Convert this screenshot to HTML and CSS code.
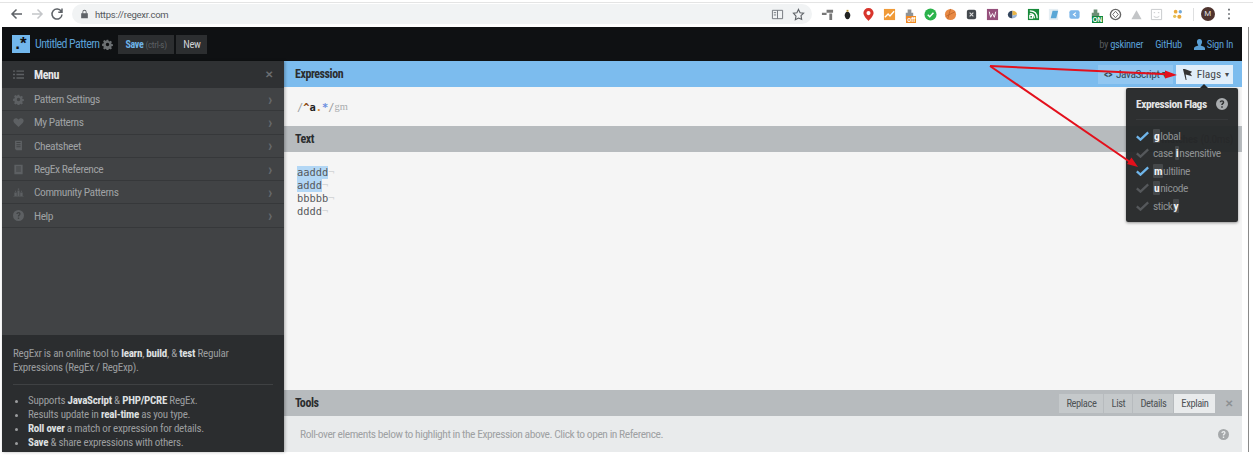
FILE: index.html
```html
<!DOCTYPE html>
<html lang="en">
<head>
<meta charset="utf-8">
<title>RegExr</title>
<link rel="stylesheet" href="styles.css">
</head>
<body>
<svg class="defs" width="0" height="0" aria-hidden="true">
  <symbol id="gear" viewBox="0 0 16 16"><path fill-rule="evenodd" d="M6.800 1h2.400l.4 2 1.300.6 1.800-1.100 1.700 1.700-1.100 1.800.6 1.300 2 .4v2.400l-2 .4-.6 1.300 1.100 1.800-1.700 1.700-1.800-1.100-1.300.6-.4 2H6.800l-.4-2-1.300-.6-1.800 1.100-1.700-1.700 1.100-1.800-.6-1.300-2-.4V6.800l2-.4.6-1.300-1.100-1.800 1.700-1.700 1.800 1.100 1.300-.6zM8 5.500a2.500 2.500 0 1 0 0 5 2.500 2.500 0 0 0 0-5z"/></symbol>
  <symbol id="heart" viewBox="0 0 16 16"><path d="M8 14.500 1.900 8.600C-.9 5.700 1 1.800 4.300 1.800c1.600 0 2.800.8 3.700 2.100.9-1.300 2.100-2.100 3.700-2.100 3.300 0 5.200 3.900 2.400 6.800z"/></symbol>
  <symbol id="sheet" viewBox="0 0 16 16"><path fill-rule="evenodd" d="M3 1h10v14H5l-2-2zM5 3v1.500h6V3zm0 3v1.500h6V6zm0 3v1.500h6V9z"/></symbol>
  <symbol id="book" viewBox="0 0 16 16"><path fill-rule="evenodd" d="M2 1h12v14H2zM4.500 3.500V5h7V3.500zm0 3V8h7V6.500zm0 3V11h7V9.500z"/></symbol>
  <symbol id="people" viewBox="0 0 16 16"><path d="M6.500 5h3v8h-3zM2 8h3.500v5H2zm8.500 0H14v5h-3.500zM7 2h2v2H7zM3 5.500h1.500V7H3zm8.500 0H13V7h-1.500zM.5 13.500h15V14H.5z"/></symbol>
  <symbol id="help" viewBox="0 0 16 16"><path fill-rule="evenodd" d="M8 0a8 8 0 1 1 0 16A8 8 0 0 1 8 0zM7 11v2h2v-2zM8 3C6.200 3 5 4.100 4.900 5.800h2c.1-.7.500-1 1.100-1 .6 0 1 .4 1 .9 0 .5-.3.800-.9 1.200-.8.600-1.100 1.100-1.100 2.100v.4h2v-.3c0-.5.200-.8.800-1.200C10.600 7.300 11 6.600 11 5.600 11 4 9.800 3 8 3z"/></symbol>
  <symbol id="check" viewBox="0 0 16 12"><path fill="none" stroke="currentColor" stroke-width="2.800" d="M1 6.500 5.500 10.500 15 1.500"/></symbol>
</svg>

<div class="browser">
  <div class="nav">
    <svg class="nav-ico" viewBox="0 0 14 14"><path d="M12 7H2M6.500 2.500 2 7l4.500 4.500" fill="none" stroke="#5f6368" stroke-width="1.500"/></svg>
    <svg class="nav-ico" viewBox="0 0 14 14"><path d="M2 7h10M7.500 2.500 12 7l-4.500 4.500" fill="none" stroke="#c4c6c9" stroke-width="1.500"/></svg>
    <svg class="nav-ico" viewBox="0 0 14 14"><path d="M11.300 4.500A5 5 0 1 0 12 7.500M12 1.500v3.700H8.300" fill="none" stroke="#5f6368" stroke-width="1.500"/></svg>
  </div>
  <div class="omnibox">
    <svg class="lock" viewBox="0 0 10 12"><path fill="#5f6368" d="M1 5h8v6H1zM2.500 5V3.500a2.500 2.500 0 0 1 5 0V5h-1V3.500a1.500 1.500 0 0 0-3 0V5z"/></svg>
    <span class="url">https://regexr.com</span>
    <span class="omni-end">
      <svg class="ext-14" viewBox="0 0 14 14"><path d="M1.500 2.500h11v9h-11zM7 2.500v9M3 5h2.500M3 7.500h2.500" fill="none" stroke="#70757a"/></svg>
      <svg class="ext-14" viewBox="0 0 14 14"><path d="m7 1.500 1.700 3.600 3.800.5-2.800 2.700.7 3.900L7 10.800l-3.400 1.900.7-3.900L1.500 5.600l3.800-.5z" fill="none" stroke="#5f6368" stroke-width="1.200"/></svg>
    </span>
  </div>
  <div class="exts">
    <svg class="ext" viewBox="0 0 14 14"><path fill="#777" d="M1 5h5v2.500H1zm5-3h7v3H6zm3 4h3v7H9z"/></svg>
    <svg class="ext" viewBox="0 0 14 14"><path fill="#222" d="M7 4c2 0 3 2 3 4s-1.300 4-3 4-3-2-3-4 1-4 3-4z"/><path fill="#b9942f" d="M6 2h2v2H6z"/></svg>
    <svg class="ext" viewBox="0 0 14 14"><path fill="#d8352c" d="M7 0a5.500 5.500 0 0 1 5.500 5.500C12.500 9 7 14 7 14S1.500 9 1.500 5.500A5.500 5.500 0 0 1 7 0z"/><circle cx="7" cy="5.500" r="2.200" fill="#fff"/></svg>
    <svg class="ext" viewBox="0 0 14 14"><path fill="#f09a37" d="M1 1h12v12H1z"/><path d="m2 10 3.500-3.500 2 2L12 3.500" fill="none" stroke="#fff" stroke-width="1.500"/></svg>
    <span class="ext ext-badged">
      <svg class="ext" viewBox="0 0 14 14"><path fill="#8d9296" d="M3 5h8v7H3zM5 1.500h4V5H5z"/></svg>
      <span class="badge badge-off">off</span>
    </span>
    <svg class="ext" viewBox="0 0 14 14"><circle cx="7" cy="7" r="6.500" fill="#2bb34b"/><path d="m4 7.200 2.200 2.200L10.200 5" fill="none" stroke="#fff" stroke-width="1.600"/></svg>
    <svg class="ext" viewBox="0 0 14 14"><circle cx="7" cy="7" r="6" fill="#e88a45"/><path d="M2 9 12 4M4 12 7 1" fill="none" stroke="#b9622a" stroke-width=".8"/></svg>
    <svg class="ext" viewBox="0 0 14 14"><rect x="2" y="2" width="10" height="10" rx="2" fill="#454a4f"/><path d="m5 5 4 4m0-4-4 4" stroke="#ddd" stroke-width="1.200"/></svg>
    <svg class="ext" viewBox="0 0 14 14"><path fill="#96507c" d="M1 1h12v12H1z"/><path d="m3.500 4 1.500 6 2-4 2 4 1.500-6" fill="none" stroke="#fff"/></svg>
    <svg class="ext" viewBox="0 0 14 14"><path fill="#33465e" d="M2 7a5 5 0 0 1 5-4v8a4 4 0 0 1-5-4z"/><path fill="#e9b547" d="M7 3a5 5 0 0 1 5 4l-5 1z"/><path fill="#9ab5d6" d="M7 8l5-1a5 5 0 0 1-5 4z"/></svg>
    <svg class="ext" viewBox="0 0 14 14"><path fill="#178a3a" d="M1 1h12v12H1z"/><path d="M3 11V8h3v3zM3 6c3 0 5 2 5 5M3 3c5 0 8 3 8 8" fill="none" stroke="#fff" stroke-width="1.300"/></svg>
    <svg class="ext" viewBox="0 0 14 14"><path fill="#e5eef3" d="M2 1h10v12H2z"/><path fill="#5aa7d6" d="M6 3h6l-2 8H4z"/></svg>
    <svg class="ext" viewBox="0 0 14 14"><rect x="1.500" y="2.500" width="11" height="9" rx="2" fill="#7db7ea"/><path d="M8.500 5 6 7l2.500 2" fill="none" stroke="#fff" stroke-width="1.300"/></svg>
    <span class="ext ext-badged">
      <svg class="ext" viewBox="0 0 14 14"><path fill="#6d8f76" d="M3 5h8v7H3zM5 1.500h4V5H5z"/></svg>
      <span class="badge badge-on">ON</span>
    </span>
    <svg class="ext" viewBox="0 0 14 14"><circle cx="7" cy="7" r="5.500" fill="none" stroke="#666" stroke-width="1.500"/><path d="M7 3.500 10 7 7 10.500 4 7z" fill="none" stroke="#666"/></svg>
    <svg class="ext" viewBox="0 0 14 14"><path fill="#c3c5c7" d="m7 2.500 5.500 9.500h-11z"/></svg>
    <svg class="ext" viewBox="0 0 14 14"><path fill="none" stroke="#c6c8ca" d="M1.500 1.500h11v11h-11zM4 5h1.500M8.500 5H10M4 9c2 1.500 4 1.500 6 0"/></svg>
    <svg class="ext" viewBox="0 0 14 14"><circle cx="5" cy="4" r="2" fill="#e9a93b"/><circle cx="10" cy="4" r="1.800" fill="#72a9d9"/><circle cx="4" cy="9" r="1.800" fill="#e5c15a"/><circle cx="9" cy="9.500" r="2.200" fill="#e9a93b"/></svg>
    <span class="sep"></span>
    <span class="avatar">M</span>
    <svg class="kebab" viewBox="0 0 4 14"><path fill="#5f6368" d="M1 1h2v2H1zm0 5h2v2H1zm0 5h2v2H1z"/></svg>
  </div>
</div>

<div class="stage">
  <div class="app">
    <header class="topbar">
      <span class="logo">.*</span>
      <span class="title">Untitled Pattern</span>
      <svg class="gear-top"><use href="#gear"/></svg>
      <span class="btn btn-save"><b>Save</b> <span class="dim">(ctrl-s)</span></span>
      <span class="btn btn-new">New</span>
      <span class="top-right">
        <span class="by">by <span class="link">gskinner</span></span>
        <span class="link">GitHub</span>
        <span class="signin">
          <svg class="user" viewBox="0 0 12 12"><path fill="#5a9fd4" d="M6 0c1.800 0 2.800 1.300 2.800 3S7.700 6.500 7.300 7c1.800.5 4.700 1.300 4.700 3.200V12H0v-1.800C0 8.300 2.900 7.500 4.700 7 4.300 6.500 3.200 4.700 3.200 3S4.200 0 6 0z"/></svg>
          <span class="link">Sign In</span>
        </span>
      </span>
    </header>
    <div class="body">
      <aside class="side">
        <div class="menu-head">
          <svg class="ico ico-head" viewBox="0 0 16 14"><path fill="#5d6063" d="M0 1h3v2H0zm5 0h11v2H5zM0 6h3v2H0zm5 0h11v2H5zm-5 5h3v2H0zm5 0h11v2H5z"/></svg>
          <b class="menu-title">Menu</b>
          <span class="x">✕</span>
        </div>
        <div class="item"><svg class="ico"><use href="#gear"/></svg><span class="label">Pattern Settings</span><span class="chev">›</span></div>
        <div class="item"><svg class="ico"><use href="#heart"/></svg><span class="label">My Patterns</span><span class="chev">›</span></div>
        <div class="item"><svg class="ico"><use href="#sheet"/></svg><span class="label">Cheatsheet</span><span class="chev">›</span></div>
        <div class="item"><svg class="ico"><use href="#book"/></svg><span class="label">RegEx Reference</span><span class="chev">›</span></div>
        <div class="item"><svg class="ico"><use href="#people"/></svg><span class="label">Community Patterns</span><span class="chev">›</span></div>
        <div class="item"><svg class="ico"><use href="#help"/></svg><span class="label">Help</span><span class="chev">›</span></div>
        <div class="side-fill"></div>
        <div class="about">
          <p class="intro">RegExr is an online tool to <b>learn</b>, <b>build</b>, &amp; <b>test</b> Regular Expressions (RegEx / RegExp).</p>
          <ul class="points">
            <li>Supports <b>JavaScript</b> &amp; <b>PHP/PCRE</b> RegEx.</li>
            <li>Results update in <b>real-time</b> as you type.</li>
            <li><b>Roll over</b> a match or expression for details.</li>
            <li><b>Save</b> &amp; share expressions with others.</li>
          </ul>
        </div>
      </aside>
      <main class="main">
        <div class="bar bar-blue">
          <b class="bar-title">Expression</b>
          <span class="bar-end">
            <span class="pill pill-js"><b class="code-ico">&lt;&gt;</b> JavaScript ▾</span>
            <span class="pill pill-flags">
              <svg class="flag" viewBox="0 0 12 12"><path fill="#333" d="M1 0 3 0 11 3 9 5 11 8 4 6 5 12 4 12z"/></svg>
              Flags <span class="caret">▾</span>
            </span>
          </span>
        </div>
        <div class="expr"><span class="sl">/</span><b class="c1">^</b><b class="c2">a</b><b class="c3">.</b><b class="c4">*</b><span class="sl">/</span><span class="fl">gm</span></div>
        <div class="bar bar-gray">
          <b class="bar-title">Text</b>
          <span class="bar-end matches"><b>2 matches</b> (0.0ms)</span>
        </div>
        <div class="text">
          <div><mark>aaddd</mark><i>¬</i></div>
          <div><mark>addd</mark><i>¬</i></div>
          <div>bbbbb<i>¬</i></div>
          <div>dddd<i>¬</i></div>
        </div>
        <div class="bar bar-gray">
          <b class="bar-title">Tools</b>
          <span class="bar-end tabs">
            <span class="tab tab-replace">Replace</span>
            <span class="tab tab-list">List</span>
            <span class="tab tab-details">Details</span>
            <span class="tab tab-on">Explain</span>
            <span class="tab-x">✕</span>
          </span>
        </div>
        <div class="tool-body">
          <span>Roll-over elements below to highlight in the Expression above. Click to open in Reference.</span>
          <svg class="tool-help"><use href="#help"/></svg>
        </div>
      </main>
    </div>
  </div>
  <div class="gutter"><span class="rule"></span></div>
</div>

<div class="pop">
  <div class="pop-head"><b>Expression Flags</b><svg class="pop-help"><use href="#help"/></svg></div>
  <div class="flag-row on"><svg class="chk"><use href="#check"/></svg><span><u>g</u>lobal</span></div>
  <div class="flag-row"><svg class="chk"><use href="#check"/></svg><span>case <u>i</u>nsensitive</span></div>
  <div class="flag-row on"><svg class="chk"><use href="#check"/></svg><span><u>m</u>ultiline</span></div>
  <div class="flag-row"><svg class="chk"><use href="#check"/></svg><span><u>u</u>nicode</span></div>
  <div class="flag-row"><svg class="chk"><use href="#check"/></svg><span>stick<u>y</u></span></div>
</div>

<svg class="arrows" viewBox="0 0 1253 455" aria-hidden="true">
  <path d="M990 66 1172 74.500" stroke="#e3101c" stroke-width="2" fill="none"/>
  <path d="m1177 75-12-4.500v8z" fill="#e3101c"/>
  <path d="M990 66 1133 164" stroke="#e3101c" stroke-width="2" fill="none"/>
  <path d="m1138 167-11-3 4.500-6.500z" fill="#e3101c"/>
</svg>
</body>
</html>
```
FILE: styles.css
```css
* { box-sizing: border-box; }
html, body { margin: 0; height: 455px; overflow: hidden; }
body {
  position: relative;
  background: #fff;
  font-family: "Roboto Condensed", "Liberation Sans Narrow", Roboto, sans-serif;
  font-size: 11.500px;
  letter-spacing: -.45px;
  color: #333;
  white-space: nowrap;
}
b { font-weight: 700; }
.defs { position: absolute; }

.browser {
  display: flex;
  align-items: center;
  padding: 2px 0 4px 10px;
  border-top: 1px solid #e4e4e4;
  margin-top: 2px;
  height: 25px;
  letter-spacing: 0;
}
.nav { display: flex; gap: 6px; width: 62px; }
.nav-ico { width: 14px; height: 14px; }
.omnibox {
  width: 740px;
  height: 20px;
  background: #f1f3f4;
  border-radius: 10px;
  display: flex;
  align-items: center;
  padding: 0 7px 0 8px;
}
.lock { width: 9px; height: 10px; margin-right: 6px; }
.url { font-family: Roboto, sans-serif; font-size: 9.500px; letter-spacing: -.25px; color: #55595d; }
.omni-end { margin-left: auto; display: flex; gap: 8px; align-items: center; }
.ext-14 { width: 13px; height: 13px; }
.exts { display: flex; align-items: center; margin-left: 5px; }
.ext { width: 13px; height: 13px; margin: 0 3.800px; flex: none; display: block; }
.ext-badged { position: relative; }
.ext-badged .ext { margin: 0; }
.badge {
  position: absolute;
  left: 3px;
  top: 8px;
  font: 700 6.500px/7px "Liberation Sans", sans-serif;
  padding: 0 1px;
  color: #fff;
}
.badge-off { background: #f08a24; }
.badge-on { background: #118a3c; }
.sep { width: 1px; height: 13px; background: #dedfe0; margin: 0 7px 0 5px; }
.avatar {
  width: 14px;
  height: 14px;
  border-radius: 50%;
  background: #4f342e;
  color: #ddd;
  font: 8px/14px Roboto, sans-serif;
  text-align: center;
}
.kebab { width: 4px; height: 12px; margin-left: 12px; }

.stage { display: flex; height: 425px; padding-left: 2px; }
.app { width: 1240px; display: flex; flex-direction: column; }
.gutter { flex: 1; display: flex; padding-left: 6px; }
.rule { width: 1px; height: 425px; background: #8a8a8a; }

.topbar {
  height: 34px;
  flex: none;
  background: #0f1113;
  display: flex;
  align-items: center;
  padding: 0 9px 0 10px;
}
.logo {
  width: 18px;
  height: 18px;
  background: #72b7ec;
  color: #101214;
  font: 700 17px/18px "Liberation Sans", sans-serif;
  letter-spacing: 0;
  text-align: center;
  margin-right: 5px;
}
.title { color: #5a9fd4; font-size: 12px; letter-spacing: -.6px; }
.gear-top { width: 11px; height: 11px; fill: #6b6f72; margin: 0 5px 0 3px; }
.btn {
  height: 19px;
  background: #2c2e30;
  color: #cfd1d3;
  font-size: 10px;
  line-height: 19px;
  margin-right: 2px;
  letter-spacing: -.3px;
}
.btn-save { width: 56px; padding-left: 7px; }
.btn-save b { color: #6eb3e8; }
.btn-new { width: 31px; text-align: center; font-size: 10.500px; }
.dim { color: #5d6164; font-size: 9px; }
.top-right { margin-left: auto; display: flex; align-items: center; gap: 12px; color: #55585b; font-size: 10.500px; letter-spacing: -.3px; }
.link { color: #5a9fd4; }
.signin { display: flex; align-items: center; gap: 2px; }
.user { width: 11px; height: 11px; }

.body { flex: 1; display: flex; min-height: 0; }
.side {
  width: 282px;
  flex: none;
  background: #414345;
  display: flex;
  flex-direction: column;
  box-shadow: 1px 0 3px rgba(0, 0, 0, .3);
  position: relative;
  color: #9fa1a3;
}
.menu-head {
  height: 27px;
  flex: none;
  background: #2f3133;
  display: flex;
  align-items: center;
}
.ico { width: 11px; height: 11px; margin: 0 10px 0 11px; fill: #5d6063; flex: none; }
.menu-title { color: #e6e7e8; font-size: 12px; }
.x { margin-left: auto; margin-right: 11px; color: #6a6d70; font-size: 10px; font-weight: 700; }
.item {
  height: 23.300px;
  flex: none;
  display: flex;
  align-items: center;
  border-bottom: 1px solid #36383a;
}
.chev { margin-left: auto; margin-right: 12px; color: #66696c; font-size: 16px; font-weight: 700; }
.side-fill { flex: 1; }
.about { height: 117px; flex: none; background: #2b2d2f; padding: 12px 11px 0 11px; font-size: 11px; letter-spacing: -.25px; line-height: 14.300px; color: #9b9d9f; }
.about b { color: #dfe0e1; }
.intro { margin: 0; padding: 0 40px 8px 0; border-bottom: 1px solid #3f4143; white-space: normal; }
.points { margin: 9px 0 0; padding: 0 0 0 15px; }

.main { flex: 1; display: flex; flex-direction: column; background: #f5f5f5; min-width: 0; }
.bar {
  height: 26px;
  flex: none;
  display: flex;
  align-items: center;
  padding: 0 9px 0 11px;
}
.bar-title { font-size: 12px; color: #2b2d2f; }
.bar-blue { background: #7cbcee; }
.bar-gray { background: #b7bbbe; }
.bar-end { margin-left: auto; display: flex; align-items: center; }
.pill { height: 19px; display: flex; align-items: center; gap: 4px; justify-content: center; }
.pill-js { width: 75px; background: #92c7f1; color: #3a4a56; margin-right: 3px; }
.code-ico { font-size: 10px; }
.pill-flags { width: 57px; background: #e0eefa; color: #45494c; letter-spacing: 0; padding-left: 2px; }
.flag { width: 11px; height: 11px; }
.caret { font-size: 8px; }
.matches { color: #5a5d60; gap: 3px; }
.expr { height: 39px; flex: none; display: flex; align-items: center; padding-left: 13px; font: 10.400px "DejaVu Sans Mono", monospace; letter-spacing: 0; }
.sl { color: #9a9c9e; }
.fl { color: #a8aaac; font-family: "Liberation Serif", serif; }
.c1 { color: #8a4a12; }
.c2 { color: #222; }
.c3 { color: #d98a2f; }
.c4 { color: #6c8fe0; }
.text { flex: 1; padding: 14px 0 0 13px; font: 10.400px/13px "DejaVu Sans Mono", monospace; letter-spacing: 0; color: #55585b; }
.text i { color: #d5d7d8; font-style: normal; }
mark { display: inline-block; height: 13px; background: #b3d7f5; color: inherit; }
.tabs { height: 26px; }
.tab {
  height: 19px;
  line-height: 19px;
  background: #c5c9cb;
  color: #4f5356;
  margin-right: 1px;
  text-align: center;
  font-size: 10.500px;
  letter-spacing: -.4px;
}
.tab-replace { width: 44px; }
.tab-list { width: 28px; }
.tab-details { width: 40px; }
.tab-on { width: 41px; background: #e9ebec; margin-right: 0; }
.tab-x { margin-left: 10px; color: #8c9093; font-size: 10px; font-weight: 700; }
.tool-body {
  height: 36px;
  flex: none;
  background: #e9ebec;
  display: flex;
  align-items: center;
  justify-content: space-between;
  padding: 0 13px 0 16px;
  color: #9ea1a3;
}
.tool-help { width: 11px; height: 11px; fill: #a5a8aa; }

.pop {
  position: absolute;
  left: 1126px;
  top: 88px;
  width: 112px;
  height: 134px;
  background: rgba(36, 38, 40, .96);
  border-radius: 2px;
  box-shadow: 0 1px 3px rgba(0, 0, 0, .4);
  padding: 0 10px;
  color: #8e9193;
}
.pop::before {
  content: "";
  position: absolute;
  left: 74px;
  top: -4px;
  border: 4px solid transparent;
  border-top: 0;
  border-bottom-color: #242628;
}
.pop-head {
  height: 32px;
  display: flex;
  align-items: center;
  justify-content: space-between;
  border-bottom: 1px solid #37393b;
  color: #e4e5e6;
  margin-bottom: 7px;
}
.pop-help { width: 12px; height: 12px; fill: #a9acae; }
.flag-row { height: 17.500px; display: flex; align-items: center; gap: 4px; }
.chk { width: 13px; height: 10px; color: #55585b; flex: none; }
.on .chk { color: #6fb5ea; }
.flag-row u {
  text-decoration: none;
  background: #45484a;
  color: #f0f1f2;
  font-weight: 700;
  padding: 0 1px;
  border-radius: 1px;
}
.arrows { position: absolute; left: 0; top: 0; width: 1253px; height: 455px; pointer-events: none; }
```
